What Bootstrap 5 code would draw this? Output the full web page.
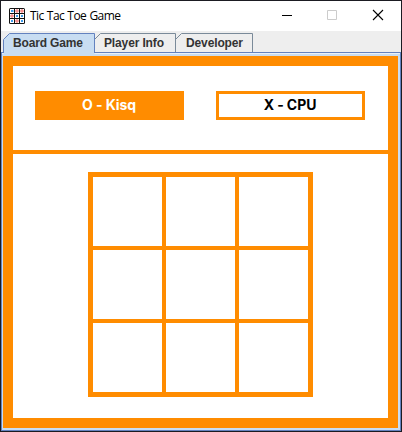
<!DOCTYPE html>
<html lang="en">
<head>
<meta charset="utf-8">
<title>Tic Tac Toe Game</title>
<link href="https://cdn.jsdelivr.net/npm/bootstrap@5.3.0/dist/css/bootstrap.min.css" rel="stylesheet">
<style>
:root{--orange:#ff8c00}
body{width:402px;height:432px;overflow:hidden;background:#1b1b22;padding:1px 2px 1px 1px;font-family:"Liberation Sans",Arial,sans-serif}
.app-window{width:400px;height:430px;background:#eee}
.titlebar{height:30px;flex:none;padding-left:8px}
.app-title{font:12px/16px "Open Sans","Segoe UI",sans-serif;letter-spacing:-.56px;word-spacing:.6px;color:#000;margin-left:5px}
.win-controls{margin-left:auto}
.tab-strip{height:21px;flex:none;padding:2px 0 0 2px}
.tab-strip button{height:19px;border:0;padding:0;background:none;display:block}
.tab-strip svg{display:block}
.tab-strip .selected{height:22px;position:relative;z-index:1}
.tab-strip text{font:bold 12px "Liberation Sans",Arial,sans-serif;fill:#333}
.tab-body{border:1px solid #6382bf;flex:1;background:#c8ddf2;padding:3px 2px 2px 1px;box-shadow:inset 0 1px #e9f1fa}
.game{border:10px solid var(--orange);height:100%}
.players{height:88px;flex:none;border-bottom:4px solid var(--orange);padding:25px 22px 0;gap:32px}
.player{width:149px;height:29px;border:3px solid var(--orange);font:bold 14px/22px Inter,sans-serif;letter-spacing:-.08px;color:#000;padding-right:1px}
.player.active{background:var(--orange);color:#fff}
.board{display:grid;grid-template:repeat(3,69px)/repeat(3,69px);gap:4px;background:var(--orange);border:5px solid var(--orange);margin:18px 0 0 75px;width:225px;height:225px}
</style>
</head>
<body>
<main class="app-window d-flex flex-column">
<header class="titlebar bg-white d-flex align-items-center">
<svg width="16" height="16" aria-hidden="true"><rect width="16" height="16" rx="1.500" fill="#111"/><path fill="#fff" d="M1 1h4v4H1zM6 1h4v4H6zM11 1h4v4h-4zM1 6h4v4H1zM6 6h4v4H6zM11 6h4v4h-4zM1 11h4v4H1zM6 11h4v4H6zM11 11h4v4h-4z"/><path fill="#3f9bea" d="M2 2h2.500v2H2zM7 7h2v2H7zM12 7h2v2h-2zM2 12h2v2H2zM12 12h2v2h-2z"/><g fill="none" stroke="#f04848" stroke-width=".9"><circle cx="8" cy="3" r="1.200"/><circle cx="13" cy="3" r="1.200"/><circle cx="3" cy="8" r="1.200"/><circle cx="8" cy="13" r="1.200"/></g></svg>
<span class="app-title">Tic Tac Toe Game</span>
<svg class="win-controls" width="120" height="30" fill="none" aria-hidden="true"><path d="M1 14.500h10" stroke="#000"/><path d="M46.500 9.500h9v9h-9z" stroke="#ccc"/><path d="M92 9l10 10M102 9l-10 10" stroke="#000" stroke-width="1.100"/></svg>
</header>
<nav class="tab-strip d-flex">
<button class="selected"><svg width="92" height="22"><path d="M.5 22V6.500L6.500.5h85V19.500V22z" fill="#c8ddf2"/><path d="M.5 20V6.500L6.500.5h85V20" fill="none" stroke="#6382bf"/><text x="10" y="14" textLength="70">Board Game</text></svg></button>
<button><svg width="81" height="19"><path d="M-.5 6.500L5.500.5h75V19" fill="#eee" stroke="#7a8a99"/><text x="9" y="14" textLength="60">Player Info</text></svg></button>
<button><svg width="77" height="19"><path d="M-.5 6.500L5.500.5h71V19" fill="#eee" stroke="#7a8a99"/><text x="10" y="14" textLength="57">Developer</text></svg></button>
</nav>
<div class="tab-body">
<section class="game bg-white">
<div class="players d-flex"><div class="player active text-center">O - Kisq</div><div class="player text-center">X - CPU</div></div>
<div class="board"><div class="bg-white"></div><div class="bg-white"></div><div class="bg-white"></div><div class="bg-white"></div><div class="bg-white"></div><div class="bg-white"></div><div class="bg-white"></div><div class="bg-white"></div><div class="bg-white"></div></div>
</section>
</div>
</main>
<script src="https://cdn.jsdelivr.net/npm/bootstrap@5.3.0/dist/js/bootstrap.bundle.min.js"></script>
</body>
</html>
